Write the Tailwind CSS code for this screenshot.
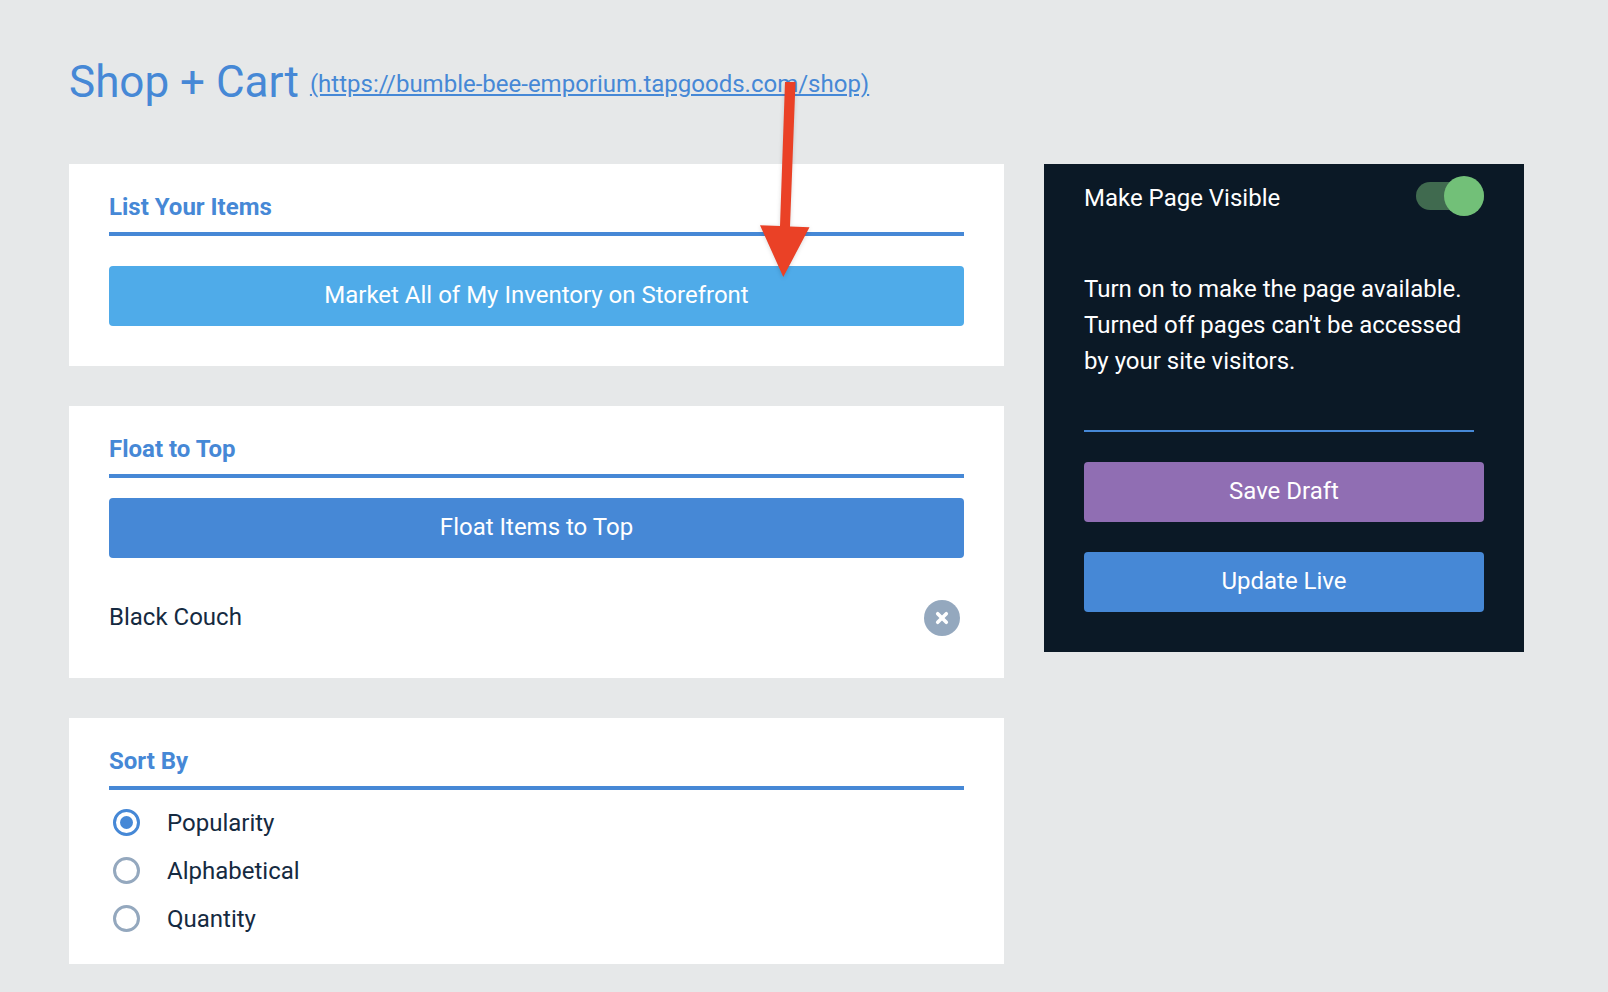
<!DOCTYPE html>
<html lang="en">
<head>
    <meta charset="UTF-8">
    <meta name="viewport" content="width=device-width, initial-scale=1.0">
    <title>Shop + Cart</title>
    <script src="https://cdn.jsdelivr.net/npm/@tailwindcss/browser@4"></script>
</head>
<body class="relative min-h-screen bg-[#e6e8e9] pt-[52px] pr-[84px] pb-7 pl-[69px] font-['Roboto',sans-serif] text-2xl text-[#152a41]">

    <!-- Page title -->
    <header class="mb-[52px] flex h-15 items-center gap-[11px] text-[#4688d6]">
        <h1 class="text-[44px]">Shop + Cart</h1>
        <a href="https://bumble-bee-emporium.tapgoods.com/shop" class="pt-1 underline">(https://bumble-bee-emporium.tapgoods.com/shop)</a>
    </header>

    <div class="flex items-start gap-10">
        <main class="flex min-w-0 flex-1 flex-col gap-10">
            <section class="bg-white px-10 pt-[25px] pb-10">
                <h2 class="border-b-4 border-[#4688d6] pb-[7px] leading-9 font-bold text-[#4688d6]">List Your Items</h2>
                <button type="button" class="mt-[30px] block h-15 w-full rounded bg-[#4fabe9] pb-0.5 text-white">Market All of My Inventory on Storefront</button>
            </section>

            <section class="bg-white px-10 pt-[25px] pb-10">
                <h2 class="border-b-4 border-[#4688d6] pb-[7px] leading-9 font-bold text-[#4688d6]">Float to Top</h2>
                <button type="button" class="mt-5 block h-15 w-full rounded bg-[#4688d6] pb-0.5 text-white">Float Items to Top</button>
                <div class="mt-10 flex h-10 items-center justify-between pr-1">
                    <span class="pb-0.5">Black Couch</span>
                    <button type="button" aria-label="Remove Black Couch" class="flex size-9 items-center justify-center rounded-full bg-[#94a8be]">
                        <svg class="size-4" viewBox="0 0 16 16" fill="none" stroke="white" stroke-width="3.6" stroke-linecap="round">
                            <path d="M3.700 3.700l8.600 8.600M12.300 3.700l-8.600 8.600" />
                        </svg>
                    </button>
                </div>
            </section>

            <section class="bg-white px-10 pt-[25px] pb-[22px]">
                <h2 class="border-b-4 border-[#4688d6] pb-[7px] leading-9 font-bold text-[#4688d6]">Sort By</h2>
                <div class="mt-2">
                    <label class="flex h-12 items-center gap-[27px] pl-1">
                        <input type="radio" name="sort" checked class="flex size-[27px] appearance-none items-center justify-center rounded-full border-3 border-[#94a8be] checked:border-[#4688d6] checked:before:size-[13px] checked:before:rounded-full checked:before:bg-[#4688d6]">
                        <span class="pt-0.5">Popularity</span>
                    </label>
                    <label class="flex h-12 items-center gap-[27px] pl-1">
                        <input type="radio" name="sort" class="flex size-[27px] appearance-none items-center justify-center rounded-full border-3 border-[#94a8be] checked:border-[#4688d6] checked:before:size-[13px] checked:before:rounded-full checked:before:bg-[#4688d6]">
                        <span class="pt-0.5">Alphabetical</span>
                    </label>
                    <label class="flex h-12 items-center gap-[27px] pl-1">
                        <input type="radio" name="sort" class="flex size-[27px] appearance-none items-center justify-center rounded-full border-3 border-[#94a8be] checked:border-[#4688d6] checked:before:size-[13px] checked:before:rounded-full checked:before:bg-[#4688d6]">
                        <span class="pt-0.5">Quantity</span>
                    </label>
                </div>
            </section>
        </main>

        <!-- Publish panel -->
        <aside class="w-[480px] shrink-0 bg-[#0b1926] px-10 pt-3 pb-10 text-white">
            <div class="flex h-10 items-center justify-between">
                <label for="visible" class="pt-1">Make Page Visible</label>
                <input id="visible" type="checkbox" role="switch" checked class="flex h-7 w-[68px] appearance-none items-center rounded-full bg-[#406a4f] before:size-10 before:rounded-full before:bg-[#72c078] checked:justify-end">
            </div>
            <p class="mt-[55px] leading-9">Turn on to make the page available. Turned off pages can't be accessed by your site visitors.</p>
            <hr class="mt-[51px] mr-[10px] border-t-2 border-[#4688d6]">
            <button type="button" class="mt-[30px] block h-15 w-full rounded bg-[#906eb3] pb-0.5">Save Draft</button>
            <button type="button" class="mt-[30px] block h-15 w-full rounded bg-[#4688d6] pb-0.5">Update Live</button>
        </aside>
    </div>

    <!-- Arrow pointing at the market button -->
    <svg class="pointer-events-none absolute top-[76px] left-[752px] h-[212px] w-[66px] drop-shadow-sm" viewBox="0 0 66 212" fill="#ea4126" aria-hidden="true">
        <path d="M33 6h10.500L38 150.500l19.500 .8L31.300 201 8 149.300l20 .6z" />
    </svg>
</body>
</html>
